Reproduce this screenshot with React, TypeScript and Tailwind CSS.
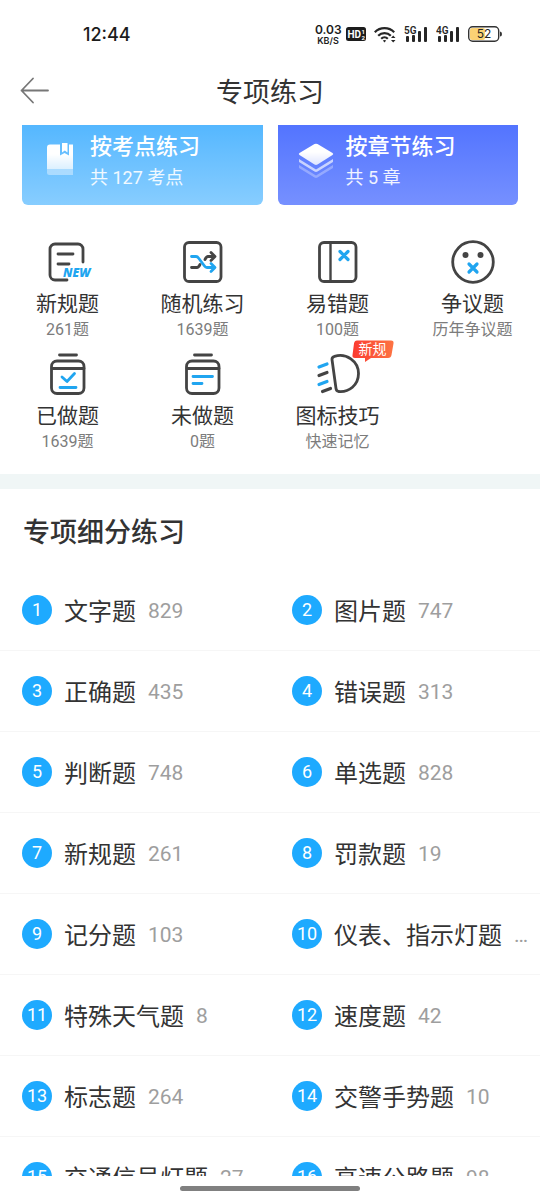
import React from 'react';

const DARK = '#444444';
const BLUE = '#20a5f0';

const topics = [
  { name: '文字题', count: '829' },
  { name: '图片题', count: '747' },
  { name: '正确题', count: '435' },
  { name: '错误题', count: '313' },
  { name: '判断题', count: '748' },
  { name: '单选题', count: '828' },
  { name: '新规题', count: '261' },
  { name: '罚款题', count: '19' },
  { name: '记分题', count: '103' },
  { name: '仪表、指示灯题', count: '…' },
  { name: '特殊天气题', count: '8' },
  { name: '速度题', count: '42' },
  { name: '标志题', count: '264' },
  { name: '交警手势题', count: '10' },
  { name: '交通信号灯题', count: '27' },
  { name: '高速公路题', count: '98' },
];

function TileIcon({ children }: { children: React.ReactNode }) {
  return (
    <svg
      viewBox="0 0 44 44"
      className="w-11 h-11 overflow-visible"
      fill="none"
      stroke={DARK}
      strokeWidth="2.8"
      strokeLinecap="round"
      strokeLinejoin="round"
    >
      {children}
    </svg>
  );
}

const NewRulesIcon = () => (
  <TileIcon>
    <path d="M37 23V10a5 5 0 0 0-5-5H9a5 5 0 0 0-5 5v26a5 5 0 0 0 5 5h12" />
    <path d="M12 15h15M12 25h11" />
    <text x="17" y="38" fill={BLUE} stroke="none" className="text-[12px] font-extrabold italic font-['Open_Sans']">NEW</text>
  </TileIcon>
);

const ShuffleIcon = () => (
  <TileIcon>
    <rect x="3.5" y="3.5" width="36.5" height="39" rx="4.5" />
    <path d="M10.500 28.500h5.500q1.500 0 3-3M24 20.500q1.500-3 3-3h6M30 13.500l4 4-4 4" />
    <path d="M10.500 17.500h4.500q1.500 0 2.500 1.500l6 8q1 1.500 2.500 1.500H33M30 24.500l4 4-4 4" stroke={BLUE} />
  </TileIcon>
);

const MistakeIcon = () => (
  <TileIcon>
    <rect x="3.500" y="3.500" width="36.500" height="39" rx="4.500" />
    <path d="M14.500 4v38" strokeWidth="2.400" />
    <path d="M24 12.500l8 8M32 12.500l-8 8" stroke={BLUE} strokeWidth="3.200" />
  </TileIcon>
);

const DisputeIcon = () => (
  <TileIcon>
    <circle cx="22" cy="23" r="20.300" />
    <circle cx="14.500" cy="16" r="3" fill={DARK} stroke="none" />
    <circle cx="29.500" cy="16" r="3" fill={DARK} stroke="none" />
    <path d="M18 25l8 8M26 25l-8 8" stroke={BLUE} strokeWidth="3.200" />
  </TileIcon>
);

const DoneIcon = () => (
  <TileIcon>
    <path d="M13.500 4h17M6 17.500h32" />
    <rect x="5.500" y="10" width="32.500" height="32.500" rx="5.500" />
    <path d="M16 26l5 4.500 7.500-8M14 36.500h16" stroke={BLUE} />
  </TileIcon>
);

const TodoIcon = () => (
  <TileIcon>
    <path d="M13.500 4h17M6 17.500h32" />
    <rect x="5.500" y="10" width="32.500" height="32.500" rx="5.500" />
    <path d="M12 25.500h19.500M12 32.500h9" stroke={BLUE} />
  </TileIcon>
);

const HeadlightIcon = () => (
  <TileIcon>
    <path d="M18.500 5.300C30 1.500 42.500 10 42.500 22.500 42.500 34 33 41.500 22.500 40.500 20.500 40 20.200 39 20 37.500L16 8.500Q15.800 6 18.500 5.300Z" />
    <path d="M3 24.500l8-3M6.500 40.500l8-3" strokeWidth="3.200" />
    <path d="M3 16l8-3M3 33.500l8-3" stroke={BLUE} strokeWidth="3.200" />
  </TileIcon>
);

const tiles = [
  { label: '新规题', sub: '261题', icon: NewRulesIcon },
  { label: '随机练习', sub: '1639题', icon: ShuffleIcon },
  { label: '易错题', sub: '100题', icon: MistakeIcon },
  { label: '争议题', sub: '历年争议题', icon: DisputeIcon },
  { label: '已做题', sub: '1639题', icon: DoneIcon },
  { label: '未做题', sub: '0题', icon: TodoIcon },
  { label: '图标技巧', sub: '快速记忆', icon: HeadlightIcon, badge: '新规' },
];

function Badge({ text }: { text: string }) {
  return (
    <span className="absolute -top-[11px] left-9 w-[42px] h-[22px]">
      <svg viewBox="0 0 42 22" className="absolute inset-0 w-full h-full">
        <defs>
          <linearGradient id="badge" x1="0" y1="0" x2="1" y2="0">
            <stop offset="0" stopColor="#fb3a30" />
            <stop offset="1" stopColor="#fd7443" />
          </linearGradient>
        </defs>
        <path d="M5 .5h34q3 0 2.500 3l-2 11.500q-.5 3-3.500 3H19l-6 4v-4H3q-3 0-2.500-3L2 3.500Q2.500.5 5 .5z" fill="url(#badge)" />
      </svg>
      <span className="relative block text-center text-[14px] leading-[18px] text-white">{text}</span>
    </span>
  );
}

function SignalIcon({ label }: { label: string }) {
  return (
    <svg viewBox="0 0 24 18" className="w-6 h-[18px]" fill="#262626">
      <text x="0" y="8.500" className="text-[10px] font-semibold font-['Roboto']">{label}</text>
      <rect x="2" y="11" width="3" height="6" rx="1" />
      <rect x="8" y="10" width="3" height="7" rx="1" />
      <rect x="14" y="6" width="3" height="11" rx="1" />
      <rect x="20" y="2" width="3" height="15" rx="1" />
    </svg>
  );
}

function StatusBar() {
  return (
    <div className="h-14 pt-3 pl-[83px] pr-[38px] flex items-center justify-between shrink-0 text-[#1c1c1c] font-['Inter']">
      <span className="text-[18px] font-medium">12:44</span>
      <div className="flex items-center gap-2">
        <div className="flex items-center gap-[5px]">
          <div className="w-[26px] text-center font-semibold">
            <div className="text-[12px] leading-3">0.03</div>
            <div className="text-[9px] leading-[9px]">KB/S</div>
          </div>
          <svg viewBox="0 0 20 14" className="w-5 h-3.5">
            <rect width="20" height="14" rx="2.500" fill="#1c1c1c" />
            <g fill="#fff" className="font-bold font-['Roboto']">
              <text x="1.500" y="10.800" fontSize="10">HD</text>
              <text x="15.500" y="6.500" fontSize="6">1</text>
              <text x="15.500" y="12.500" fontSize="6">2</text>
            </g>
          </svg>
        </div>
        <svg viewBox="0 0 22 17" className="w-[22px] h-[17px]" fill="none" stroke="#262626" strokeWidth="2.200">
          <path d="M.8 6.200a13.500 13.500 0 0 1 19.400 0M4.200 9.700a8.900 8.900 0 0 1 12.600 0M7.200 12.700a4.800 4.800 0 0 1 6.600 0" />
          <path d="M8.800 14.500l1.700 2 1.700-2q-1.700-1.200-3.400 0zM17 12l2.200-2.500L21.500 12zM17 14l2.200 2.500 2.300-2.500z" fill="#262626" stroke="none" />
        </svg>
        <SignalIcon label="5G" />
        <SignalIcon label="4G" />
        <svg viewBox="0 0 34 16" className="w-[34px] h-4">
          <rect x="2" y="2" width="15" height="12" rx="2" fill="#fbd274" />
          <rect x=".7" y=".7" width="30" height="14.600" rx="4" fill="none" stroke="#333" strokeWidth="1.400" />
          <path d="M32 5.500q2 0 2 2.500t-2 2.500z" fill="#333" />
          <text x="16" y="12.300" fontSize="12" textAnchor="middle" fill="#262626">52</text>
        </svg>
      </div>
    </div>
  );
}

const BookIcon = () => (
  <svg viewBox="0 0 40 40" className="w-10 h-10">
    <defs>
      <linearGradient id="book" x1="0" y1="0" x2="0" y2="1">
        <stop offset="0.400" stopColor="#fff" />
        <stop offset="1" stopColor="#fff" stopOpacity="0.750" />
      </linearGradient>
    </defs>
    <path d="M10 1.500h10v11l4.500-2.500 4.500 2.500v-11h4V26H7V4.500q0-3 3-3z" fill="url(#book)" />
    <path d="M22 0h5.500v9.500l-2.700-2-2.800 2z" fill="#fff" />
    <path d="M7 26h26v6H9.500Q7 32 7 29.500z" fill="#fff" fillOpacity="0.400" />
  </svg>
);

const LayersIcon = () => (
  <svg viewBox="0 0 40 40" className="w-10 h-10">
    <defs>
      <linearGradient id="layer" x1="0" y1="0" x2="0" y2="1">
        <stop offset="0.400" stopColor="#fff" />
        <stop offset="1" stopColor="#fff" stopOpacity="0.800" />
      </linearGradient>
    </defs>
    <path d="M18.500 1.100q1.500-.8 3 0l15 9q1.500 1 0 2l-15 9.400q-1.500.8-3 0l-15-9.400q-1.500-1 0-2z" fill="url(#layer)" />
    <path d="M3 16L20 26.500 37 16v3L21.500 28.500q-1.500.8-3 0L3 19z" fill="#fff" fillOpacity="0.650" />
    <path d="M3 22L20 32.500 37 22v3L21.500 34.500q-1.500.8-3 0L3 25z" fill="#fff" fillOpacity="0.300" />
  </svg>
);

const cards = [
  { title: '按考点练习', sub: '共 127 考点', icon: BookIcon, bg: 'from-[#54b7ff] to-[#87cdff]' },
  { title: '按章节练习', sub: '共 5 章', icon: LayersIcon, bg: 'from-[#5374ff] to-[#7690ff]' },
];

export default function App() {
  return (
    <div className="h-screen flex flex-col bg-white text-[#333333] font-['Roboto','Noto_Sans_CJK_SC',sans-serif]">
      <StatusBar />

      <header className="h-[69px] shrink-0 px-5 grid grid-cols-[1fr_auto_1fr] items-center">
        <button type="button" aria-label="返回" className="justify-self-start">
          <svg viewBox="0 0 30 28" className="w-[30px] h-7" fill="none" stroke="#777" strokeWidth="1.800" strokeLinecap="round" strokeLinejoin="round">
            <path d="M28 13.500H1.500M13 1.500l-11.500 12L13 25.500" />
          </svg>
        </button>
        <h1 className="pt-1 text-[27px] leading-8">专项练习</h1>
      </header>

      <main className="flex-1 min-h-0 overflow-y-auto [scrollbar-width:none]">
        <div className="px-[22px] flex gap-[15px]">
          {cards.map(({ title, sub, icon: Icon, bg }) => (
            <button
              key={title}
              type="button"
              className={`flex-1 pt-[7px] pb-[11px] pl-[18px] flex items-center gap-2.5 rounded-b-md text-left text-white bg-linear-to-b ${bg}`}
            >
              <Icon />
              <span>
                <span className="block text-[22px] leading-[30px] font-medium">{title}</span>
                <span className="block text-[18px] leading-8 text-white/90">{sub}</span>
              </span>
            </button>
          ))}
        </div>

        <div className="pt-[34px] pb-[22px] grid grid-cols-4 gap-y-[11px]">
          {tiles.map(({ label, sub, icon: Icon, badge }) => (
            <button key={label} type="button" className="flex flex-col items-center">
              <span className="relative mb-[5px]">
                <Icon />
                {badge && <Badge text={badge} />}
              </span>
              <span className="text-[21px] leading-8">{label}</span>
              <span className="text-[16px] leading-5 text-[#7c7c7c]">{sub}</span>
            </button>
          ))}
        </div>

        <div className="h-[15px] bg-[#f0f6f6]" />

        <h2 className="h-[81px] pt-2 px-[23px] flex items-center text-[27px] font-medium">专项细分练习</h2>

        <div className="grid grid-cols-2">
          {topics.map((topic, i) => (
            <button
              key={topic.name}
              type="button"
              className="h-[81px] pl-[22px] pr-2.5 flex items-center gap-3 border-b border-[#f6f6f6] text-left"
            >
              <span className="w-[30px] h-[30px] shrink-0 rounded-full bg-[#1eaaff] flex items-center justify-center text-[18px] leading-7 text-white">
                {i + 1}
              </span>
              <span className="pt-1 text-[24px] whitespace-nowrap">{topic.name}</span>
              <span className="pt-1 text-[21px] text-[#9e9e9e]">{topic.count}</span>
            </button>
          ))}
        </div>
      </main>

      <footer className="h-6 shrink-0 flex justify-center items-center">
        <div className="w-1/3 h-[5px] rounded-full bg-[#808080]" />
      </footer>
    </div>
  );
}
